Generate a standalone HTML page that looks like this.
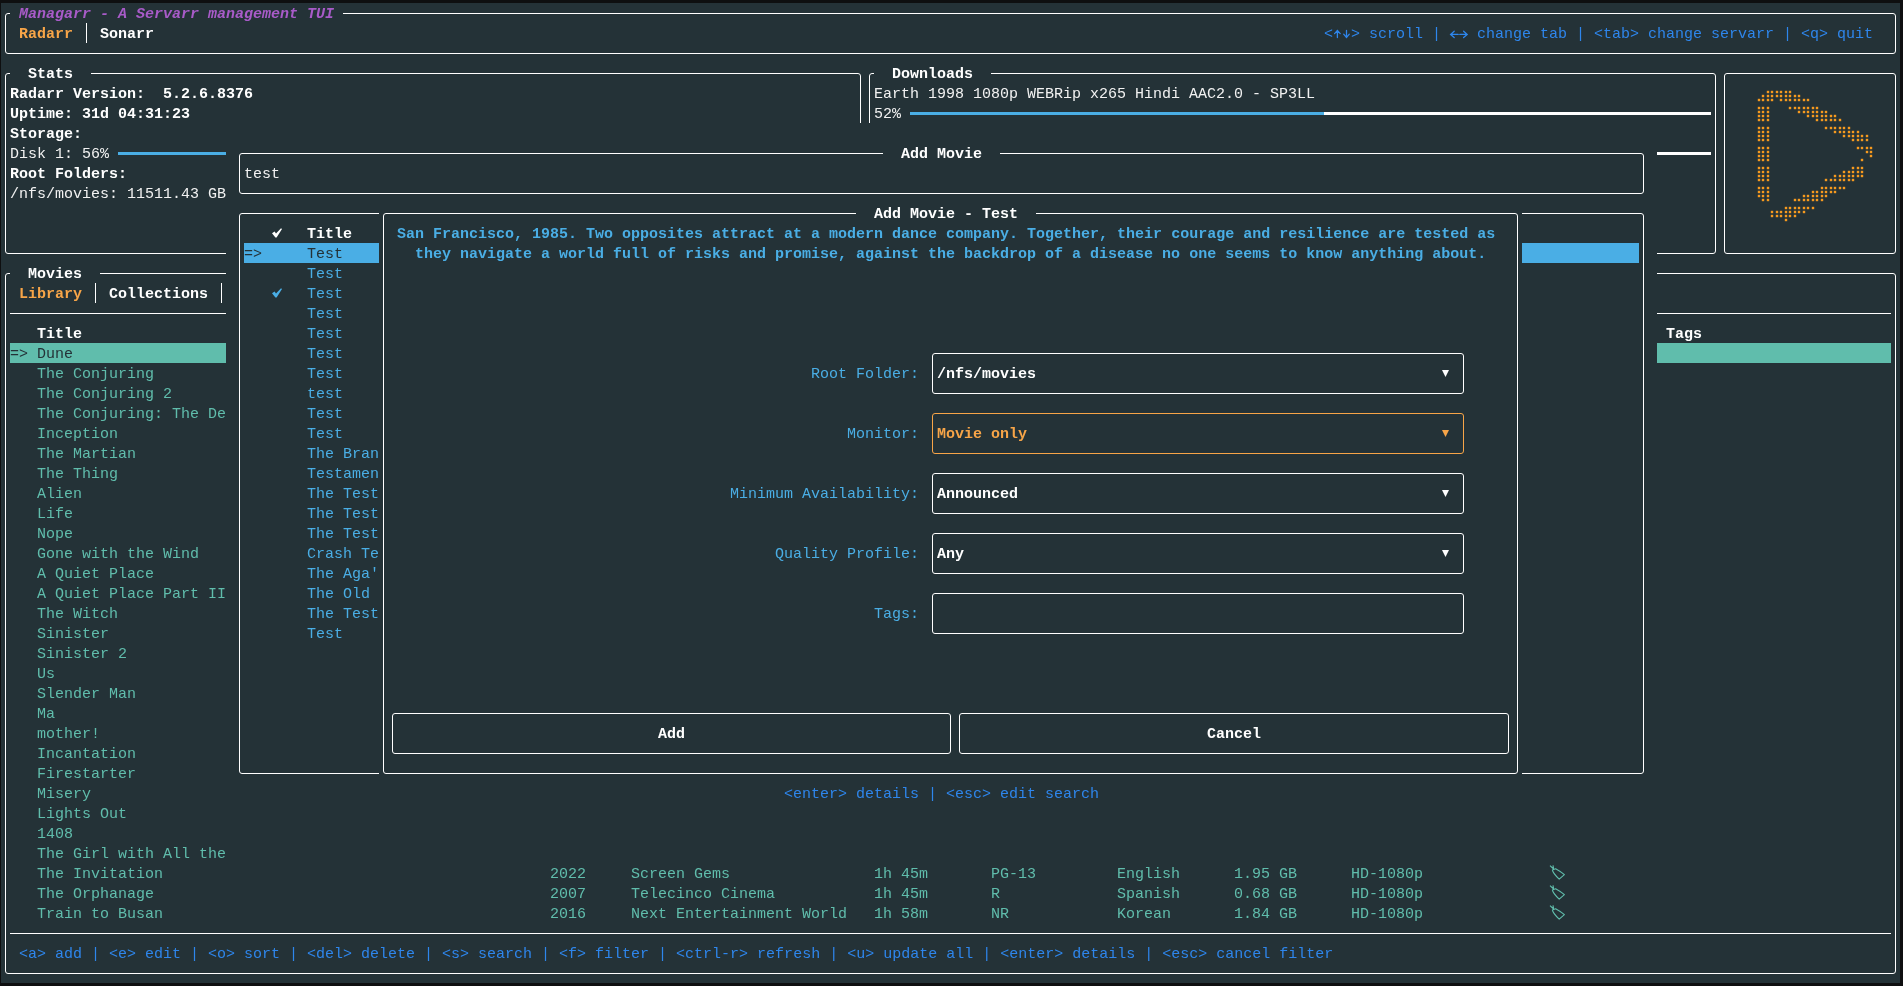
<!DOCTYPE html>
<html><head><meta charset="utf-8"><style>
html,body{-webkit-font-smoothing:antialiased;margin:0;padding:0;background:#0e0f10;width:1903px;height:986px;overflow:hidden}
#term{position:absolute;left:1px;top:3px;width:1899px;height:980px;background:#243237}
.t{position:absolute;white-space:pre;font-family:"Liberation Mono",monospace;font-size:15px;line-height:20px;height:20px;will-change:transform}
.r{position:absolute}
.b{position:absolute;box-sizing:border-box;border:1px solid #fff;border-radius:3px}
.s{position:absolute;overflow:visible}
</style></head>
<body><div id="term"></div>
<div class="b" style="left:5px;top:13px;width:1891px;height:41px;border-color:#ffffff"></div>
<div class="t" style="left:10px;top:5px;color:#a85bc8;font-weight:bold;font-style:italic;background:#243237;"> Managarr - A Servarr management TUI </div>
<div class="t" style="left:19px;top:25px;color:#f7a548;font-weight:bold;">Radarr</div>
<div class="r" style="left:86px;top:23px;width:1px;height:20px;background:#ffffff"></div>
<div class="t" style="left:100px;top:25px;color:#ffffff;font-weight:bold;">Sonarr</div>
<div class="t" style="left:1324px;top:25px;color:#2e86ec;">&lt;  &gt; scroll |</div>
<svg class="s" style="left:1333px;top:23px" width="18" height="20" viewBox="0 0 18 20" fill="none" stroke="#2e86ec" stroke-width="1.3" stroke-linecap="round"><path d="M4.4 7.6 V14.6 M1.6 10.6 L4.4 7.4 L7.2 10.6"/><path d="M13.5 7.4 V14.4 M10.7 11.2 L13.5 14.6 L16.3 11.2"/></svg>
<svg class="s" style="left:1450px;top:23px" width="18" height="20" viewBox="0 0 18 20" fill="none" stroke="#2e86ec" stroke-width="1.3" stroke-linecap="round"><path d="M0.6 11.4 H8.2 M9.8 11.4 H17.2 M4.2 8.2 L0.6 11.4 L4.2 14.6 M13.6 8.2 L17.2 11.4 L13.6 14.6"/></svg>
<div class="t" style="left:1477px;top:25px;color:#2e86ec;">change tab | &lt;tab&gt; change servarr | &lt;q&gt; quit</div>
<div class="b" style="left:5px;top:73px;width:856px;height:181px;border-color:#ffffff"></div>
<div class="t" style="left:10px;top:65px;color:#ffffff;font-weight:bold;background:#243237;">  Stats  </div>
<div class="t" style="left:10px;top:85px;color:#ffffff;font-weight:bold;">Radarr Version:  5.2.6.8376</div>
<div class="t" style="left:10px;top:105px;color:#ffffff;font-weight:bold;">Uptime: 31d 04:31:23</div>
<div class="t" style="left:10px;top:125px;color:#ffffff;font-weight:bold;">Storage:</div>
<div class="t" style="left:10px;top:145px;color:#f2f2f2;">Disk 1: 56%</div>
<div class="r" style="left:118px;top:152px;width:405px;height:3px;background:#4aaee5"></div>
<div class="r" style="left:523px;top:152px;width:333px;height:3px;background:#ffffff"></div>
<div class="t" style="left:10px;top:165px;color:#ffffff;font-weight:bold;">Root Folders:</div>
<div class="t" style="left:10px;top:185px;color:#f2f2f2;">/nfs/movies: 11511.43 GB</div>
<div class="b" style="left:869px;top:73px;width:847px;height:181px;border-color:#ffffff"></div>
<div class="t" style="left:874px;top:65px;color:#ffffff;font-weight:bold;background:#243237;">  Downloads  </div>
<div class="t" style="left:874px;top:85px;color:#f2f2f2;">Earth 1998 1080p WEBRip x265 Hindi AAC2.0 - SP3LL</div>
<div class="t" style="left:874px;top:105px;color:#f2f2f2;">52%</div>
<div class="r" style="left:910px;top:112px;width:414px;height:3px;background:#4aaee5"></div>
<div class="r" style="left:1324px;top:112px;width:387px;height:3px;background:#ffffff"></div>
<div class="r" style="left:910px;top:152px;width:801px;height:3px;background:#ffffff"></div>
<div class="b" style="left:1724px;top:73px;width:172px;height:181px;border-color:#ffffff"></div>
<div class="b" style="left:5px;top:273px;width:1891px;height:701px;border-color:#ffffff"></div>
<div class="t" style="left:10px;top:265px;color:#ffffff;font-weight:bold;background:#243237;">  Movies  </div>
<div class="t" style="left:19px;top:285px;color:#f7a548;font-weight:bold;">Library</div>
<div class="r" style="left:95px;top:283px;width:1px;height:20px;background:#ffffff"></div>
<div class="t" style="left:109px;top:285px;color:#ffffff;font-weight:bold;">Collections</div>
<div class="r" style="left:221px;top:283px;width:1px;height:20px;background:#ffffff"></div>
<div class="r" style="left:10px;top:313px;width:1881px;height:1px;background:#ffffff"></div>
<div class="t" style="left:37px;top:325px;color:#ffffff;font-weight:bold;">Title</div>
<div class="t" style="left:1666px;top:325px;color:#ffffff;font-weight:bold;">Tags</div>
<div class="r" style="left:10px;top:343px;width:1881px;height:20px;background:#60bdac"></div>
<div class="t" style="left:10px;top:345px;color:#243237;">=&gt; Dune</div>
<div class="t" style="left:37px;top:365px;color:#60bdac;">The Conjuring</div>
<div class="t" style="left:37px;top:385px;color:#60bdac;">The Conjuring 2</div>
<div class="t" style="left:37px;top:405px;color:#60bdac;">The Conjuring: The De</div>
<div class="t" style="left:37px;top:425px;color:#60bdac;">Inception</div>
<div class="t" style="left:37px;top:445px;color:#60bdac;">The Martian</div>
<div class="t" style="left:37px;top:465px;color:#60bdac;">The Thing</div>
<div class="t" style="left:37px;top:485px;color:#60bdac;">Alien</div>
<div class="t" style="left:37px;top:505px;color:#60bdac;">Life</div>
<div class="t" style="left:37px;top:525px;color:#60bdac;">Nope</div>
<div class="t" style="left:37px;top:545px;color:#60bdac;">Gone with the Wind</div>
<div class="t" style="left:37px;top:565px;color:#60bdac;">A Quiet Place</div>
<div class="t" style="left:37px;top:585px;color:#60bdac;">A Quiet Place Part II</div>
<div class="t" style="left:37px;top:605px;color:#60bdac;">The Witch</div>
<div class="t" style="left:37px;top:625px;color:#60bdac;">Sinister</div>
<div class="t" style="left:37px;top:645px;color:#60bdac;">Sinister 2</div>
<div class="t" style="left:37px;top:665px;color:#60bdac;">Us</div>
<div class="t" style="left:37px;top:685px;color:#60bdac;">Slender Man</div>
<div class="t" style="left:37px;top:705px;color:#60bdac;">Ma</div>
<div class="t" style="left:37px;top:725px;color:#60bdac;">mother!</div>
<div class="t" style="left:37px;top:745px;color:#60bdac;">Incantation</div>
<div class="t" style="left:37px;top:765px;color:#60bdac;">Firestarter</div>
<div class="t" style="left:37px;top:785px;color:#60bdac;">Misery</div>
<div class="t" style="left:37px;top:805px;color:#60bdac;">Lights Out</div>
<div class="t" style="left:37px;top:825px;color:#60bdac;">1408</div>
<div class="t" style="left:37px;top:845px;color:#60bdac;">The Girl with All the</div>
<div class="t" style="left:37px;top:865px;color:#60bdac;">The Invitation</div>
<div class="t" style="left:37px;top:885px;color:#60bdac;">The Orphanage</div>
<div class="t" style="left:37px;top:905px;color:#60bdac;">Train to Busan</div>
<div class="t" style="left:550px;top:865px;color:#60bdac;">2022</div>
<div class="t" style="left:631px;top:865px;color:#60bdac;">Screen Gems</div>
<div class="t" style="left:874px;top:865px;color:#60bdac;">1h 45m</div>
<div class="t" style="left:991px;top:865px;color:#60bdac;">PG-13</div>
<div class="t" style="left:1117px;top:865px;color:#60bdac;">English</div>
<div class="t" style="left:1234px;top:865px;color:#60bdac;">1.95 GB</div>
<div class="t" style="left:1351px;top:865px;color:#60bdac;">HD-1080p</div>
<svg class="s" style="left:1549px;top:863px" width="9" height="20" viewBox="0 0 9 20"><path d="M3.4 6.9 Q3.6 9.8 10.2 16.2 L15.4 11.6 Q11 8.2 6.6 5.8 Z M1 2.6 L4.6 6 M4 2.3 L4.6 6.2" fill="none" stroke="#60bdac" stroke-width="1.1" stroke-linejoin="round"/></svg>
<div class="t" style="left:550px;top:885px;color:#60bdac;">2007</div>
<div class="t" style="left:631px;top:885px;color:#60bdac;">Telecinco Cinema</div>
<div class="t" style="left:874px;top:885px;color:#60bdac;">1h 45m</div>
<div class="t" style="left:991px;top:885px;color:#60bdac;">R</div>
<div class="t" style="left:1117px;top:885px;color:#60bdac;">Spanish</div>
<div class="t" style="left:1234px;top:885px;color:#60bdac;">0.68 GB</div>
<div class="t" style="left:1351px;top:885px;color:#60bdac;">HD-1080p</div>
<svg class="s" style="left:1549px;top:883px" width="9" height="20" viewBox="0 0 9 20"><path d="M3.4 6.9 Q3.6 9.8 10.2 16.2 L15.4 11.6 Q11 8.2 6.6 5.8 Z M1 2.6 L4.6 6 M4 2.3 L4.6 6.2" fill="none" stroke="#60bdac" stroke-width="1.1" stroke-linejoin="round"/></svg>
<div class="t" style="left:550px;top:905px;color:#60bdac;">2016</div>
<div class="t" style="left:631px;top:905px;color:#60bdac;">Next Entertainment World</div>
<div class="t" style="left:874px;top:905px;color:#60bdac;">1h 58m</div>
<div class="t" style="left:991px;top:905px;color:#60bdac;">NR</div>
<div class="t" style="left:1117px;top:905px;color:#60bdac;">Korean</div>
<div class="t" style="left:1234px;top:905px;color:#60bdac;">1.84 GB</div>
<div class="t" style="left:1351px;top:905px;color:#60bdac;">HD-1080p</div>
<svg class="s" style="left:1549px;top:903px" width="9" height="20" viewBox="0 0 9 20"><path d="M3.4 6.9 Q3.6 9.8 10.2 16.2 L15.4 11.6 Q11 8.2 6.6 5.8 Z M1 2.6 L4.6 6 M4 2.3 L4.6 6.2" fill="none" stroke="#60bdac" stroke-width="1.1" stroke-linejoin="round"/></svg>
<div class="r" style="left:10px;top:933px;width:1881px;height:1px;background:#ffffff"></div>
<div class="t" style="left:19px;top:945px;color:#2e86ec;">&lt;a&gt; add | &lt;e&gt; edit | &lt;o&gt; sort | &lt;del&gt; delete | &lt;s&gt; search | &lt;f&gt; filter | &lt;ctrl-r&gt; refresh | &lt;u&gt; update all | &lt;enter&gt; details | &lt;esc&gt; cancel filter</div>
<div class="r" style="left:226px;top:123px;width:1431px;height:740px;background:#243237"></div>
<div class="b" style="left:239px;top:153px;width:1405px;height:41px;border-color:#ffffff"></div>
<div class="t" style="left:883px;top:145px;color:#ffffff;font-weight:bold;background:#243237;">  Add Movie  </div>
<div class="t" style="left:244px;top:165px;color:#f2f2f2;">test</div>
<div class="b" style="left:239px;top:213px;width:1405px;height:561px;border-color:#ffffff"></div>
<div class="t" style="left:307px;top:225px;color:#ffffff;font-weight:bold;">Title</div>
<div class="r" style="left:244px;top:243px;width:1395px;height:20px;background:#4aaee5"></div>
<div class="t" style="left:244px;top:245px;color:#243237;">=&gt;</div>
<div class="t" style="left:307px;top:245px;color:#243237;">Test</div>
<div class="t" style="left:307px;top:265px;color:#4aaee5;">Test</div>
<div class="t" style="left:307px;top:285px;color:#4aaee5;">Test</div>
<div class="t" style="left:307px;top:305px;color:#4aaee5;">Test</div>
<div class="t" style="left:307px;top:325px;color:#4aaee5;">Test</div>
<div class="t" style="left:307px;top:345px;color:#4aaee5;">Test</div>
<div class="t" style="left:307px;top:365px;color:#4aaee5;">Test</div>
<div class="t" style="left:307px;top:385px;color:#4aaee5;">test</div>
<div class="t" style="left:307px;top:405px;color:#4aaee5;">Test</div>
<div class="t" style="left:307px;top:425px;color:#4aaee5;">Test</div>
<div class="t" style="left:307px;top:445px;color:#4aaee5;">The Bran</div>
<div class="t" style="left:307px;top:465px;color:#4aaee5;">Testamen</div>
<div class="t" style="left:307px;top:485px;color:#4aaee5;">The Test</div>
<div class="t" style="left:307px;top:505px;color:#4aaee5;">The Test</div>
<div class="t" style="left:307px;top:525px;color:#4aaee5;">The Test</div>
<div class="t" style="left:307px;top:545px;color:#4aaee5;">Crash Te</div>
<div class="t" style="left:307px;top:565px;color:#4aaee5;">The Aga&#x27;</div>
<div class="t" style="left:307px;top:585px;color:#4aaee5;">The Old</div>
<div class="t" style="left:307px;top:605px;color:#4aaee5;">The Test</div>
<div class="t" style="left:307px;top:625px;color:#4aaee5;">Test</div>
<svg class="s" style="left:271px;top:223px" width="12" height="20" viewBox="0 0 12 20"><path d="M1.0 10.2 L3.6 8.4 L5.0 10.4 L10.0 5.2 L11.0 6.0 L5.6 14.4 L4.4 14.4 Z" fill="#ffffff"/></svg>
<svg class="s" style="left:271px;top:283px" width="12" height="20" viewBox="0 0 12 20"><path d="M1.0 10.2 L3.6 8.4 L5.0 10.4 L10.0 5.2 L11.0 6.0 L5.6 14.4 L4.4 14.4 Z" fill="#4aaee5"/></svg>
<div class="r" style="left:379px;top:203px;width:1143px;height:580px;background:#243237"></div>
<div class="b" style="left:383px;top:213px;width:1135px;height:561px;border-color:#ffffff"></div>
<div class="t" style="left:856px;top:205px;color:#ffffff;font-weight:bold;background:#243237;">  Add Movie - Test  </div>
<div class="t" style="left:397px;top:225px;color:#4aaee5;font-weight:bold;">San Francisco, 1985. Two opposites attract at a modern dance company. Together, their courage and resilience are tested as</div>
<div class="t" style="left:415px;top:245px;color:#4aaee5;font-weight:bold;">they navigate a world full of risks and promise, against the backdrop of a disease no one seems to know anything about.</div>
<div class="t" style="left:811px;top:365px;color:#4aaee5;">Root Folder:</div>
<div class="b" style="left:932px;top:353px;width:532px;height:41px;border-color:#ffffff"></div>
<div class="t" style="left:937px;top:365px;color:#ffffff;font-weight:bold;">/nfs/movies</div>
<svg class="s" style="left:1441px;top:363px" width="9" height="20" viewBox="0 0 9 20"><path d="M1 7 L8 7 L4.5 14 Z" fill="#ffffff"/></svg>
<div class="t" style="left:847px;top:425px;color:#4aaee5;">Monitor:</div>
<div class="b" style="left:932px;top:413px;width:532px;height:41px;border-color:#f7a548"></div>
<div class="t" style="left:937px;top:425px;color:#f7a548;font-weight:bold;">Movie only</div>
<svg class="s" style="left:1441px;top:423px" width="9" height="20" viewBox="0 0 9 20"><path d="M1 7 L8 7 L4.5 14 Z" fill="#f7a548"/></svg>
<div class="t" style="left:730px;top:485px;color:#4aaee5;">Minimum Availability:</div>
<div class="b" style="left:932px;top:473px;width:532px;height:41px;border-color:#ffffff"></div>
<div class="t" style="left:937px;top:485px;color:#ffffff;font-weight:bold;">Announced</div>
<svg class="s" style="left:1441px;top:483px" width="9" height="20" viewBox="0 0 9 20"><path d="M1 7 L8 7 L4.5 14 Z" fill="#ffffff"/></svg>
<div class="t" style="left:775px;top:545px;color:#4aaee5;">Quality Profile:</div>
<div class="b" style="left:932px;top:533px;width:532px;height:41px;border-color:#ffffff"></div>
<div class="t" style="left:937px;top:545px;color:#ffffff;font-weight:bold;">Any</div>
<svg class="s" style="left:1441px;top:543px" width="9" height="20" viewBox="0 0 9 20"><path d="M1 7 L8 7 L4.5 14 Z" fill="#ffffff"/></svg>
<div class="t" style="left:874px;top:605px;color:#4aaee5;">Tags:</div>
<div class="b" style="left:932px;top:593px;width:532px;height:41px;border-color:#ffffff"></div>
<div class="b" style="left:392px;top:713px;width:559px;height:41px;border-color:#ffffff"></div>
<div class="t" style="left:658px;top:725px;color:#ffffff;font-weight:bold;">Add</div>
<div class="b" style="left:959px;top:713px;width:550px;height:41px;border-color:#ffffff"></div>
<div class="t" style="left:1207px;top:725px;color:#ffffff;font-weight:bold;">Cancel</div>
<div class="t" style="left:784px;top:785px;color:#2e86ec;">&lt;enter&gt; details | &lt;esc&gt; edit search</div>
<svg class="s" style="left:0;top:0" width="1903" height="986" fill="#f79a1e"><rect x="1766.8" y="90.8" width="2.4" height="2.4"/><rect x="1770.8" y="90.8" width="2.4" height="2.4"/><rect x="1775.8" y="90.8" width="2.4" height="2.4"/><rect x="1779.8" y="90.8" width="2.4" height="2.4"/><rect x="1784.8" y="90.8" width="2.4" height="2.4"/><rect x="1788.8" y="90.8" width="2.4" height="2.4"/><rect x="1761.8" y="94.8" width="2.4" height="2.4"/><rect x="1766.8" y="94.8" width="2.4" height="2.4"/><rect x="1770.8" y="94.8" width="2.4" height="2.4"/><rect x="1775.8" y="94.8" width="2.4" height="2.4"/><rect x="1779.8" y="94.8" width="2.4" height="2.4"/><rect x="1784.8" y="94.8" width="2.4" height="2.4"/><rect x="1788.8" y="94.8" width="2.4" height="2.4"/><rect x="1793.8" y="94.8" width="2.4" height="2.4"/><rect x="1797.8" y="94.8" width="2.4" height="2.4"/><rect x="1757.8" y="98.8" width="2.4" height="2.4"/><rect x="1761.8" y="98.8" width="2.4" height="2.4"/><rect x="1766.8" y="98.8" width="2.4" height="2.4"/><rect x="1770.8" y="98.8" width="2.4" height="2.4"/><rect x="1779.8" y="98.8" width="2.4" height="2.4"/><rect x="1784.8" y="98.8" width="2.4" height="2.4"/><rect x="1788.8" y="98.8" width="2.4" height="2.4"/><rect x="1793.8" y="98.8" width="2.4" height="2.4"/><rect x="1797.8" y="98.8" width="2.4" height="2.4"/><rect x="1802.8" y="98.8" width="2.4" height="2.4"/><rect x="1806.8" y="98.8" width="2.4" height="2.4"/><rect x="1757.8" y="106.8" width="2.4" height="2.4"/><rect x="1761.8" y="106.8" width="2.4" height="2.4"/><rect x="1766.8" y="106.8" width="2.4" height="2.4"/><rect x="1788.8" y="106.8" width="2.4" height="2.4"/><rect x="1793.8" y="106.8" width="2.4" height="2.4"/><rect x="1797.8" y="106.8" width="2.4" height="2.4"/><rect x="1802.8" y="106.8" width="2.4" height="2.4"/><rect x="1806.8" y="106.8" width="2.4" height="2.4"/><rect x="1811.8" y="106.8" width="2.4" height="2.4"/><rect x="1815.8" y="106.8" width="2.4" height="2.4"/><rect x="1757.8" y="110.8" width="2.4" height="2.4"/><rect x="1761.8" y="110.8" width="2.4" height="2.4"/><rect x="1766.8" y="110.8" width="2.4" height="2.4"/><rect x="1797.8" y="110.8" width="2.4" height="2.4"/><rect x="1802.8" y="110.8" width="2.4" height="2.4"/><rect x="1806.8" y="110.8" width="2.4" height="2.4"/><rect x="1811.8" y="110.8" width="2.4" height="2.4"/><rect x="1815.8" y="110.8" width="2.4" height="2.4"/><rect x="1820.8" y="110.8" width="2.4" height="2.4"/><rect x="1824.8" y="110.8" width="2.4" height="2.4"/><rect x="1757.8" y="114.8" width="2.4" height="2.4"/><rect x="1761.8" y="114.8" width="2.4" height="2.4"/><rect x="1766.8" y="114.8" width="2.4" height="2.4"/><rect x="1806.8" y="114.8" width="2.4" height="2.4"/><rect x="1811.8" y="114.8" width="2.4" height="2.4"/><rect x="1815.8" y="114.8" width="2.4" height="2.4"/><rect x="1820.8" y="114.8" width="2.4" height="2.4"/><rect x="1824.8" y="114.8" width="2.4" height="2.4"/><rect x="1829.8" y="114.8" width="2.4" height="2.4"/><rect x="1833.8" y="114.8" width="2.4" height="2.4"/><rect x="1757.8" y="118.8" width="2.4" height="2.4"/><rect x="1761.8" y="118.8" width="2.4" height="2.4"/><rect x="1766.8" y="118.8" width="2.4" height="2.4"/><rect x="1815.8" y="118.8" width="2.4" height="2.4"/><rect x="1820.8" y="118.8" width="2.4" height="2.4"/><rect x="1824.8" y="118.8" width="2.4" height="2.4"/><rect x="1829.8" y="118.8" width="2.4" height="2.4"/><rect x="1833.8" y="118.8" width="2.4" height="2.4"/><rect x="1838.8" y="118.8" width="2.4" height="2.4"/><rect x="1757.8" y="126.8" width="2.4" height="2.4"/><rect x="1761.8" y="126.8" width="2.4" height="2.4"/><rect x="1766.8" y="126.8" width="2.4" height="2.4"/><rect x="1824.8" y="126.8" width="2.4" height="2.4"/><rect x="1829.8" y="126.8" width="2.4" height="2.4"/><rect x="1833.8" y="126.8" width="2.4" height="2.4"/><rect x="1838.8" y="126.8" width="2.4" height="2.4"/><rect x="1842.8" y="126.8" width="2.4" height="2.4"/><rect x="1847.8" y="126.8" width="2.4" height="2.4"/><rect x="1757.8" y="130.8" width="2.4" height="2.4"/><rect x="1761.8" y="130.8" width="2.4" height="2.4"/><rect x="1766.8" y="130.8" width="2.4" height="2.4"/><rect x="1833.8" y="130.8" width="2.4" height="2.4"/><rect x="1838.8" y="130.8" width="2.4" height="2.4"/><rect x="1842.8" y="130.8" width="2.4" height="2.4"/><rect x="1847.8" y="130.8" width="2.4" height="2.4"/><rect x="1851.8" y="130.8" width="2.4" height="2.4"/><rect x="1856.8" y="130.8" width="2.4" height="2.4"/><rect x="1757.8" y="134.8" width="2.4" height="2.4"/><rect x="1761.8" y="134.8" width="2.4" height="2.4"/><rect x="1766.8" y="134.8" width="2.4" height="2.4"/><rect x="1842.8" y="134.8" width="2.4" height="2.4"/><rect x="1847.8" y="134.8" width="2.4" height="2.4"/><rect x="1851.8" y="134.8" width="2.4" height="2.4"/><rect x="1856.8" y="134.8" width="2.4" height="2.4"/><rect x="1860.8" y="134.8" width="2.4" height="2.4"/><rect x="1865.8" y="134.8" width="2.4" height="2.4"/><rect x="1757.8" y="138.8" width="2.4" height="2.4"/><rect x="1761.8" y="138.8" width="2.4" height="2.4"/><rect x="1766.8" y="138.8" width="2.4" height="2.4"/><rect x="1851.8" y="138.8" width="2.4" height="2.4"/><rect x="1856.8" y="138.8" width="2.4" height="2.4"/><rect x="1860.8" y="138.8" width="2.4" height="2.4"/><rect x="1865.8" y="138.8" width="2.4" height="2.4"/><rect x="1757.8" y="146.8" width="2.4" height="2.4"/><rect x="1761.8" y="146.8" width="2.4" height="2.4"/><rect x="1766.8" y="146.8" width="2.4" height="2.4"/><rect x="1856.8" y="146.8" width="2.4" height="2.4"/><rect x="1860.8" y="146.8" width="2.4" height="2.4"/><rect x="1865.8" y="146.8" width="2.4" height="2.4"/><rect x="1869.8" y="146.8" width="2.4" height="2.4"/><rect x="1757.8" y="150.8" width="2.4" height="2.4"/><rect x="1761.8" y="150.8" width="2.4" height="2.4"/><rect x="1766.8" y="150.8" width="2.4" height="2.4"/><rect x="1865.8" y="150.8" width="2.4" height="2.4"/><rect x="1869.8" y="150.8" width="2.4" height="2.4"/><rect x="1757.8" y="154.8" width="2.4" height="2.4"/><rect x="1761.8" y="154.8" width="2.4" height="2.4"/><rect x="1766.8" y="154.8" width="2.4" height="2.4"/><rect x="1869.8" y="154.8" width="2.4" height="2.4"/><rect x="1757.8" y="158.8" width="2.4" height="2.4"/><rect x="1761.8" y="158.8" width="2.4" height="2.4"/><rect x="1766.8" y="158.8" width="2.4" height="2.4"/><rect x="1860.8" y="158.8" width="2.4" height="2.4"/><rect x="1757.8" y="166.8" width="2.4" height="2.4"/><rect x="1761.8" y="166.8" width="2.4" height="2.4"/><rect x="1766.8" y="166.8" width="2.4" height="2.4"/><rect x="1851.8" y="166.8" width="2.4" height="2.4"/><rect x="1856.8" y="166.8" width="2.4" height="2.4"/><rect x="1860.8" y="166.8" width="2.4" height="2.4"/><rect x="1757.8" y="170.8" width="2.4" height="2.4"/><rect x="1761.8" y="170.8" width="2.4" height="2.4"/><rect x="1766.8" y="170.8" width="2.4" height="2.4"/><rect x="1842.8" y="170.8" width="2.4" height="2.4"/><rect x="1847.8" y="170.8" width="2.4" height="2.4"/><rect x="1851.8" y="170.8" width="2.4" height="2.4"/><rect x="1856.8" y="170.8" width="2.4" height="2.4"/><rect x="1860.8" y="170.8" width="2.4" height="2.4"/><rect x="1757.8" y="174.8" width="2.4" height="2.4"/><rect x="1761.8" y="174.8" width="2.4" height="2.4"/><rect x="1766.8" y="174.8" width="2.4" height="2.4"/><rect x="1833.8" y="174.8" width="2.4" height="2.4"/><rect x="1838.8" y="174.8" width="2.4" height="2.4"/><rect x="1842.8" y="174.8" width="2.4" height="2.4"/><rect x="1847.8" y="174.8" width="2.4" height="2.4"/><rect x="1851.8" y="174.8" width="2.4" height="2.4"/><rect x="1856.8" y="174.8" width="2.4" height="2.4"/><rect x="1860.8" y="174.8" width="2.4" height="2.4"/><rect x="1757.8" y="178.8" width="2.4" height="2.4"/><rect x="1761.8" y="178.8" width="2.4" height="2.4"/><rect x="1766.8" y="178.8" width="2.4" height="2.4"/><rect x="1824.8" y="178.8" width="2.4" height="2.4"/><rect x="1829.8" y="178.8" width="2.4" height="2.4"/><rect x="1833.8" y="178.8" width="2.4" height="2.4"/><rect x="1838.8" y="178.8" width="2.4" height="2.4"/><rect x="1842.8" y="178.8" width="2.4" height="2.4"/><rect x="1847.8" y="178.8" width="2.4" height="2.4"/><rect x="1851.8" y="178.8" width="2.4" height="2.4"/><rect x="1757.8" y="186.8" width="2.4" height="2.4"/><rect x="1761.8" y="186.8" width="2.4" height="2.4"/><rect x="1766.8" y="186.8" width="2.4" height="2.4"/><rect x="1820.8" y="186.8" width="2.4" height="2.4"/><rect x="1824.8" y="186.8" width="2.4" height="2.4"/><rect x="1829.8" y="186.8" width="2.4" height="2.4"/><rect x="1833.8" y="186.8" width="2.4" height="2.4"/><rect x="1838.8" y="186.8" width="2.4" height="2.4"/><rect x="1842.8" y="186.8" width="2.4" height="2.4"/><rect x="1757.8" y="190.8" width="2.4" height="2.4"/><rect x="1761.8" y="190.8" width="2.4" height="2.4"/><rect x="1766.8" y="190.8" width="2.4" height="2.4"/><rect x="1811.8" y="190.8" width="2.4" height="2.4"/><rect x="1815.8" y="190.8" width="2.4" height="2.4"/><rect x="1820.8" y="190.8" width="2.4" height="2.4"/><rect x="1824.8" y="190.8" width="2.4" height="2.4"/><rect x="1829.8" y="190.8" width="2.4" height="2.4"/><rect x="1833.8" y="190.8" width="2.4" height="2.4"/><rect x="1757.8" y="194.8" width="2.4" height="2.4"/><rect x="1761.8" y="194.8" width="2.4" height="2.4"/><rect x="1766.8" y="194.8" width="2.4" height="2.4"/><rect x="1802.8" y="194.8" width="2.4" height="2.4"/><rect x="1806.8" y="194.8" width="2.4" height="2.4"/><rect x="1811.8" y="194.8" width="2.4" height="2.4"/><rect x="1815.8" y="194.8" width="2.4" height="2.4"/><rect x="1820.8" y="194.8" width="2.4" height="2.4"/><rect x="1824.8" y="194.8" width="2.4" height="2.4"/><rect x="1761.8" y="198.8" width="2.4" height="2.4"/><rect x="1766.8" y="198.8" width="2.4" height="2.4"/><rect x="1793.8" y="198.8" width="2.4" height="2.4"/><rect x="1797.8" y="198.8" width="2.4" height="2.4"/><rect x="1802.8" y="198.8" width="2.4" height="2.4"/><rect x="1806.8" y="198.8" width="2.4" height="2.4"/><rect x="1811.8" y="198.8" width="2.4" height="2.4"/><rect x="1815.8" y="198.8" width="2.4" height="2.4"/><rect x="1820.8" y="198.8" width="2.4" height="2.4"/><rect x="1784.8" y="206.8" width="2.4" height="2.4"/><rect x="1788.8" y="206.8" width="2.4" height="2.4"/><rect x="1793.8" y="206.8" width="2.4" height="2.4"/><rect x="1797.8" y="206.8" width="2.4" height="2.4"/><rect x="1802.8" y="206.8" width="2.4" height="2.4"/><rect x="1806.8" y="206.8" width="2.4" height="2.4"/><rect x="1811.8" y="206.8" width="2.4" height="2.4"/><rect x="1770.8" y="210.8" width="2.4" height="2.4"/><rect x="1775.8" y="210.8" width="2.4" height="2.4"/><rect x="1779.8" y="210.8" width="2.4" height="2.4"/><rect x="1784.8" y="210.8" width="2.4" height="2.4"/><rect x="1788.8" y="210.8" width="2.4" height="2.4"/><rect x="1793.8" y="210.8" width="2.4" height="2.4"/><rect x="1797.8" y="210.8" width="2.4" height="2.4"/><rect x="1802.8" y="210.8" width="2.4" height="2.4"/><rect x="1770.8" y="214.8" width="2.4" height="2.4"/><rect x="1775.8" y="214.8" width="2.4" height="2.4"/><rect x="1779.8" y="214.8" width="2.4" height="2.4"/><rect x="1784.8" y="214.8" width="2.4" height="2.4"/><rect x="1788.8" y="214.8" width="2.4" height="2.4"/><rect x="1793.8" y="214.8" width="2.4" height="2.4"/><rect x="1784.8" y="218.8" width="2.4" height="2.4"/></svg>
</body></html>
